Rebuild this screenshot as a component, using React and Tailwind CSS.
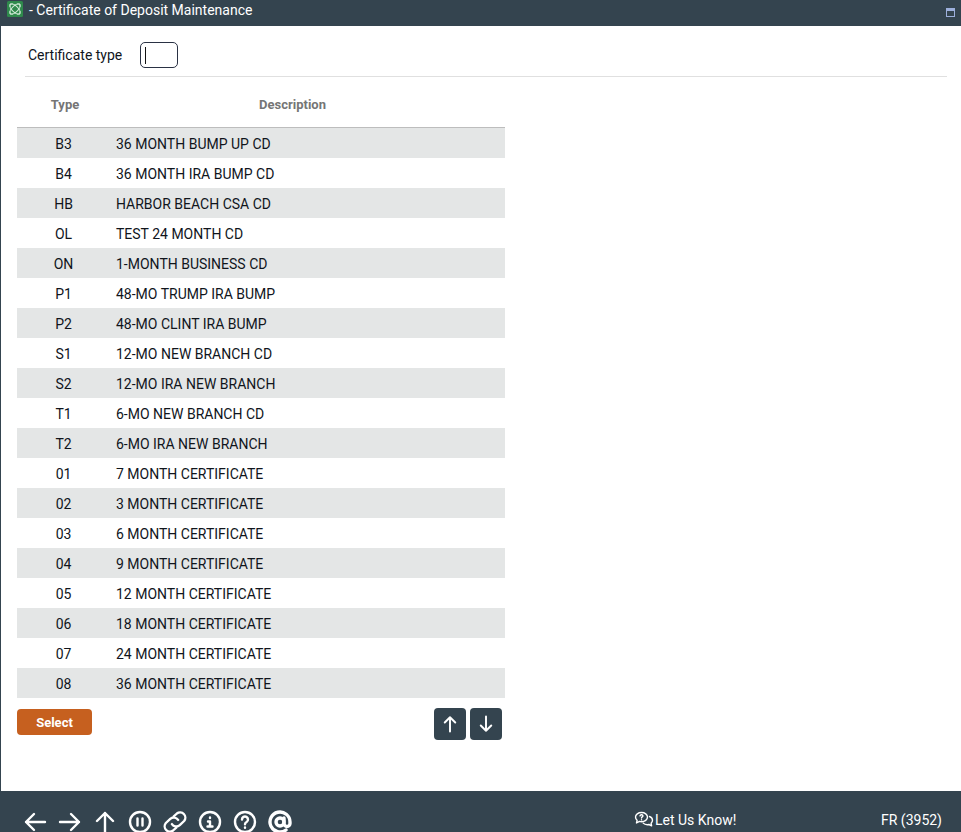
import React from 'react';

const ROWS = [
    ['B3', '36 MONTH BUMP UP CD'],
    ['B4', '36 MONTH IRA BUMP CD'],
    ['HB', 'HARBOR BEACH CSA CD'],
    ['OL', 'TEST 24 MONTH CD'],
    ['ON', '1-MONTH BUSINESS CD'],
    ['P1', '48-MO TRUMP IRA BUMP'],
    ['P2', '48-MO CLINT IRA BUMP'],
    ['S1', '12-MO NEW BRANCH CD'],
    ['S2', '12-MO IRA NEW BRANCH'],
    ['T1', '6-MO NEW BRANCH CD'],
    ['T2', '6-MO IRA NEW BRANCH'],
    ['01', '7 MONTH CERTIFICATE'],
    ['02', '3 MONTH CERTIFICATE'],
    ['03', '6 MONTH CERTIFICATE'],
    ['04', '9 MONTH CERTIFICATE'],
    ['05', '12 MONTH CERTIFICATE'],
    ['06', '18 MONTH CERTIFICATE'],
    ['07', '24 MONTH CERTIFICATE'],
    ['08', '36 MONTH CERTIFICATE'],
];

function Logo() {
    return (
        <svg width="16" height="16" viewBox="0 0 16 16" className="block">
            <rect width="16" height="16" rx="1.5" fill="#2f8a4c" />
            <g fill="none" stroke="#cfe9d6" strokeWidth="1">
                <ellipse cx="8" cy="8" rx="6.5" ry="3" transform="rotate(45 8 8)" />
                <ellipse cx="8" cy="8" rx="6.5" ry="3" transform="rotate(-45 8 8)" />
                <path d="M3 3h3M3 3v3M13 3h-3M13 3v3M3 13h3M3 13v-3M13 13h-3M13 13v-3" />
            </g>
        </svg>
    );
}

function Stroke({ size = 24, width = 2.4, children }) {
    return (
        <svg width={size} height={size} viewBox="0 0 24 24" fill="none" stroke="white" strokeWidth={width} strokeLinecap="round" strokeLinejoin="round" className="block shrink-0">
            {children}
        </svg>
    );
}

function FooterIcons() {
    return (
        <div className="flex items-center gap-[11px]">
            <Stroke><path d="M22 12H3M11 4l-8 8 8 8" /></Stroke>
            <Stroke><path d="M2 12h19M13 4l8 8-8 8" /></Stroke>
            <Stroke><path d="M12 24V3M4 11l8-8 8 8" /></Stroke>
            <Stroke><circle cx="12" cy="12" r="10" /><path d="M9.5 8.5v7M14.5 8.5v7" /></Stroke>
            <Stroke width={1.9}>
                <g transform="translate(12 12) scale(1.25) translate(-12 -12)">
                    <path d="M11 7.500l2.500-2.300a4.200 4.200 0 0 1 5.800 6l-3.500 3.300a4.200 4.200 0 0 1-6.300-.8" />
                    <path d="M13 16.500l-2.500 2.300a4.200 4.200 0 0 1-5.800-6l3.500-3.300a4.200 4.200 0 0 1 6.300.8" />
                </g>
            </Stroke>
            <Stroke><circle cx="12" cy="12" r="10" /><path d="M12 7.500v.5M10 11.500h2v5M9.500 16.500h5" /></Stroke>
            <Stroke><circle cx="12" cy="12" r="10" /><path d="M9 9.500a3 3 0 1 1 4.600 2.500c-1 .6-1.600 1.200-1.600 2.300M12 17.500v.2" /></Stroke>
            <Stroke width={3.4}><circle cx="12" cy="12" r="4" /><path d="M16 8v5.500a3 3 0 0 0 6 0V12a10 10 0 1 0-4 8" /></Stroke>
        </div>
    );
}

function TalkIcon() {
    return (
        <svg width="20" height="18" viewBox="0 0 20 18" fill="none" stroke="white" strokeWidth="1.4" strokeLinecap="round" strokeLinejoin="round" className="block shrink-0">
            <path d="M7.500 1.500c3.300 0 6 2 6 4.600s-2.700 4.600-6 4.600c-.7 0-1.400-.1-2-.3L2.500 12l.6-2.700C2 8.500 1.500 7.300 1.500 6.100c0-2.600 2.700-4.600 6-4.600z" />
            <path d="M15.500 5.500c1.800.7 3 2.100 3 3.800 0 1.100-.5 2.100-1.400 2.900l.5 2.600-2.700-1.300c-.5.1-1 .2-1.600.2-1.700 0-3.200-.6-4.100-1.600" />
            <path d="M6 4.800c.2-.8.900-1.200 1.700-1.100.8.100 1.300.7 1.200 1.400-.1.700-1.400 1-1.400 1.900M7.500 8.800v.1" />
        </svg>
    );
}

export default function App() {
    return (
        <div className="h-[832px] w-[961px] flex flex-col overflow-hidden bg-[#34444f] font-['Roboto',sans-serif]">
            <div className="h-[26px] shrink-0 flex items-start justify-between pl-[7px] pr-[6px] text-white">
                <div className="flex items-start gap-[6px] pt-px">
                    <Logo />
                    <span className="text-sm leading-[19px]">- Certificate of Deposit Maintenance</span>
                </div>
                <div className="mt-[8px] h-[9px] w-[9px] border border-[#9db0dc] border-t-[3px]"></div>
            </div>

            <div className="h-[765px] shrink-0 ml-[1px] bg-white flex flex-col">
                <div className="ml-[24px] w-[922px] mt-[16px] h-[35px] flex items-start border-b border-[#e0e0e0]">
                    <label className="ml-[3px] mt-[5px] w-[112px] text-sm leading-[17px] text-[#10151c]">Certificate type</label>
                    <div className="h-[26px] w-[38px] rounded-[5px] border border-[#2a3244] flex items-center pl-[4px]">
                        <div className="h-[17px] w-px bg-[#111]"></div>
                    </div>
                </div>

                <div className="ml-[16px] w-[488px]">
                    <div className="h-[51px] pt-[5px] flex items-center border-b border-[#bdbdbd] text-[13px] font-bold text-[#757575]">
                        <div className="w-[96px] text-center">Type</div>
                        <div className="w-[359px] text-center">Description</div>
                    </div>
                    {ROWS.map(([code, desc], i) => (
                        <div key={code} className={`h-[30px] pt-[2px] flex items-center text-sm text-[#10151c] ${i % 2 === 0 ? 'bg-[#e4e6e6]' : 'bg-white'}`}>
                            <div className="w-[93px] text-center">{code}</div>
                            <div className="ml-[6px]">{desc}</div>
                        </div>
                    ))}
                    <div className="mt-[10px] flex items-start justify-between pr-[3px]">
                        <button className="mt-[1px] h-[26px] w-[75px] pt-[2px] rounded-[4px] bg-[#c6601f] text-[13px] font-bold text-white">Select</button>
                        <div className="flex gap-[4px]">
                            <button className="h-[32px] w-[32px] rounded-[4px] bg-[#34444f] flex items-center justify-center">
                                <Stroke size={18} width={2.6}><path d="M12 22V3M5 10l7-7 7 7" /></Stroke>
                            </button>
                            <button className="h-[32px] w-[32px] rounded-[4px] bg-[#34444f] flex items-center justify-center">
                                <Stroke size={18} width={2.6}><path d="M12 2v19M5 14l7 7 7-7" /></Stroke>
                            </button>
                        </div>
                    </div>
                </div>
            </div>

            <div className="flex-1 flex items-start pl-[23px] pt-[19px] text-white overflow-hidden">
                <FooterIcons />
                <div className="ml-auto mr-[19px] flex items-center text-sm leading-[20px]">
                    <TalkIcon />
                    <span className="ml-px w-[226px]">Let Us Know!</span>
                    <span>FR (3952)</span>
                </div>
            </div>
        </div>
    );
}
